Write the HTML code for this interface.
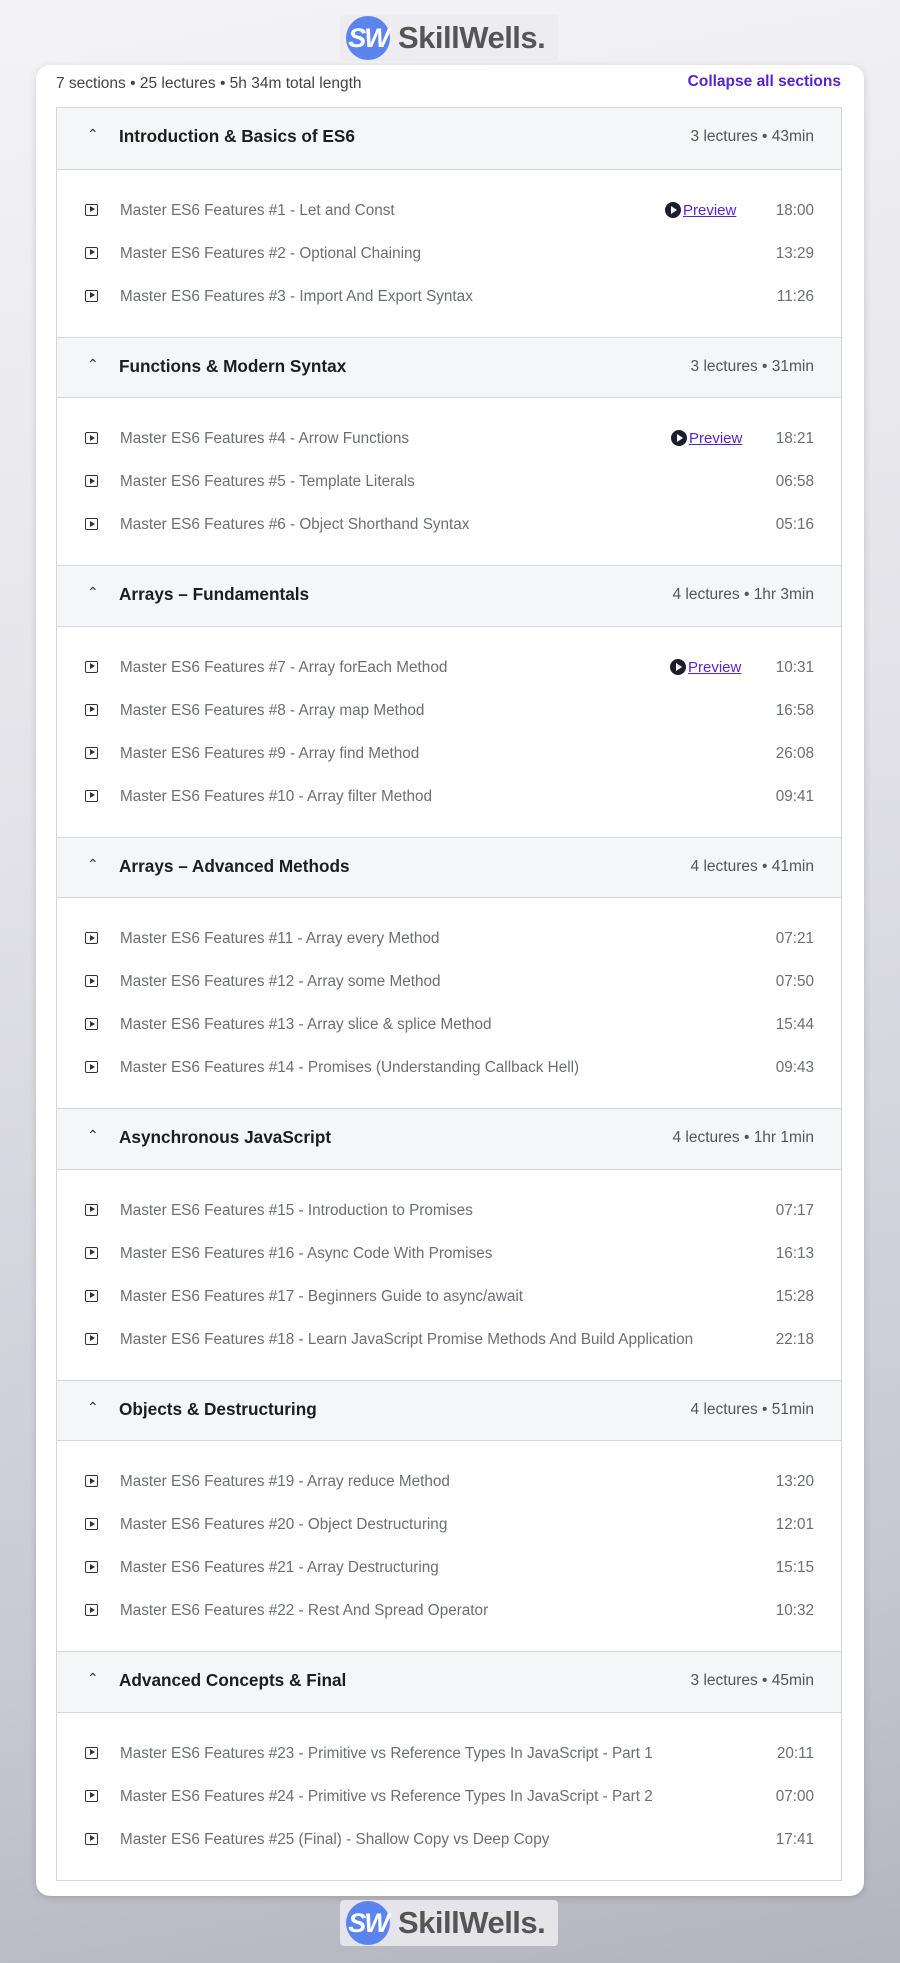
<!DOCTYPE html>
<html><head><meta charset="utf-8"><style>
*{box-sizing:border-box;margin:0;padding:0}
body{width:900px;height:1963px;overflow:hidden;font-family:"Liberation Sans",sans-serif;background:linear-gradient(170deg,#f4f4f7 0%,#e2e2e8 40%,#c8c8d1 80%,#b4b4c0 100%);position:relative}
.logo{position:absolute;left:340px;width:218px;height:46px;background:rgba(235,235,240,.85);border-radius:4px;display:flex;align-items:center}
.logo .c{width:44px;height:44px;border-radius:50%;background:#5b84ee;margin-left:6px;color:#fff;font-weight:900;font-size:27px;display:flex;align-items:center;justify-content:center;letter-spacing:-2px;font-style:italic}
.logo .t{font-weight:bold;font-size:31px;color:#555;margin-left:8px;letter-spacing:-0.5px}
.card{position:absolute;left:36px;top:65px;width:828px;height:1831px;background:#fff;border-radius:14px;box-shadow:0 2px 8px rgba(0,0,0,.15)}
.sum{position:absolute;left:20px;top:10px;font-size:15.5px;color:#444}
.col{position:absolute;right:23px;top:8px;font-size:15.5px;color:#5624d0;font-weight:bold}
.tbl{position:absolute;left:20px;top:42px;width:786px;border:1px solid #d1d7dc}
.hd{height:61.5px;background:#f5f6f8;border-top:1px solid #d1d7dc;border-bottom:1px solid #d1d7dc;position:relative}
.hd:first-child{border-top:none}
.hd .ch{position:absolute;left:30px;top:18px;font-size:14px;color:#333}
.hd .ti{position:absolute;left:62px;top:18px;font-size:17.2px;font-weight:bold;color:#1c1d1f}
.hd .me{position:absolute;right:27px;top:20px;font-size:15.5px;color:#555}
.bl{padding:19px 0}
.it{height:43px;position:relative;font-size:15.3px;color:#6a6f73}
.it .ic{position:absolute;left:28px;top:15px;width:13px;height:12px;border:1.6px solid #333;border-radius:2px}
.it .ic:after{content:"";position:absolute;left:3.5px;top:1.8px;border-left:5px solid #333;border-top:3px solid transparent;border-bottom:3px solid transparent}
.it .tx{position:absolute;left:63px;top:13px}
.it .tm{position:absolute;right:27px;top:13px}
.it .pv{position:absolute;left:610px;top:13px;color:#5624d0;text-decoration:underline;font-size:15px}
.it .pv i{display:inline-block;width:16px;height:16px;border-radius:50%;background:#1c1d2f;vertical-align:-3px;margin-right:2px;position:relative}
.it .pv i:after{content:"";position:absolute;left:6px;top:4px;border-left:6px solid #fff;border-top:4px solid transparent;border-bottom:4px solid transparent}
</style></head><body>
<div class="logo" style="top:15px"><div class="c">SW</div><div class="t">SkillWells.</div></div>
<div class="card">
<div class="sum">7 sections • 25 lectures • 5h 34m total length</div>
<div class="col">Collapse all sections</div>
<div class="tbl">
<div class="hd"><span class="ch">&#8963;</span><span class="ti">Introduction &amp; Basics of ES6</span><span class="me">3 lectures • 43min</span></div>
<div class="bl">
<div class="it"><span class="ic"></span><span class="tx">Master ES6 Features #1 - Let and Const</span><span class="pv" style="left:608px"><i></i>Preview</span><span class="tm">18:00</span></div>
<div class="it"><span class="ic"></span><span class="tx">Master ES6 Features #2 - Optional Chaining</span><span class="tm">13:29</span></div>
<div class="it"><span class="ic"></span><span class="tx">Master ES6 Features #3 - Import And Export Syntax</span><span class="tm">11:26</span></div>
</div>
<div class="hd"><span class="ch">&#8963;</span><span class="ti">Functions &amp; Modern Syntax</span><span class="me">3 lectures • 31min</span></div>
<div class="bl">
<div class="it"><span class="ic"></span><span class="tx">Master ES6 Features #4 - Arrow Functions</span><span class="pv" style="left:614px"><i></i>Preview</span><span class="tm">18:21</span></div>
<div class="it"><span class="ic"></span><span class="tx">Master ES6 Features #5 - Template Literals</span><span class="tm">06:58</span></div>
<div class="it"><span class="ic"></span><span class="tx">Master ES6 Features #6 - Object Shorthand Syntax</span><span class="tm">05:16</span></div>
</div>
<div class="hd"><span class="ch">&#8963;</span><span class="ti">Arrays – Fundamentals</span><span class="me">4 lectures • 1hr 3min</span></div>
<div class="bl">
<div class="it"><span class="ic"></span><span class="tx">Master ES6 Features #7 - Array forEach Method</span><span class="pv" style="left:613px"><i></i>Preview</span><span class="tm">10:31</span></div>
<div class="it"><span class="ic"></span><span class="tx">Master ES6 Features #8 - Array map Method</span><span class="tm">16:58</span></div>
<div class="it"><span class="ic"></span><span class="tx">Master ES6 Features #9 - Array find Method</span><span class="tm">26:08</span></div>
<div class="it"><span class="ic"></span><span class="tx">Master ES6 Features #10 - Array filter Method</span><span class="tm">09:41</span></div>
</div>
<div class="hd"><span class="ch">&#8963;</span><span class="ti">Arrays – Advanced Methods</span><span class="me">4 lectures • 41min</span></div>
<div class="bl">
<div class="it"><span class="ic"></span><span class="tx">Master ES6 Features #11 - Array every Method</span><span class="tm">07:21</span></div>
<div class="it"><span class="ic"></span><span class="tx">Master ES6 Features #12 - Array some Method</span><span class="tm">07:50</span></div>
<div class="it"><span class="ic"></span><span class="tx">Master ES6 Features #13 - Array slice &amp; splice Method</span><span class="tm">15:44</span></div>
<div class="it"><span class="ic"></span><span class="tx">Master ES6 Features #14 - Promises (Understanding Callback Hell)</span><span class="tm">09:43</span></div>
</div>
<div class="hd"><span class="ch">&#8963;</span><span class="ti">Asynchronous JavaScript</span><span class="me">4 lectures • 1hr 1min</span></div>
<div class="bl">
<div class="it"><span class="ic"></span><span class="tx">Master ES6 Features #15 - Introduction to Promises</span><span class="tm">07:17</span></div>
<div class="it"><span class="ic"></span><span class="tx">Master ES6 Features #16 - Async Code With Promises</span><span class="tm">16:13</span></div>
<div class="it"><span class="ic"></span><span class="tx">Master ES6 Features #17 - Beginners Guide to async/await</span><span class="tm">15:28</span></div>
<div class="it"><span class="ic"></span><span class="tx">Master ES6 Features #18 - Learn JavaScript Promise Methods And Build Application</span><span class="tm">22:18</span></div>
</div>
<div class="hd"><span class="ch">&#8963;</span><span class="ti">Objects &amp; Destructuring</span><span class="me">4 lectures • 51min</span></div>
<div class="bl">
<div class="it"><span class="ic"></span><span class="tx">Master ES6 Features #19 - Array reduce Method</span><span class="tm">13:20</span></div>
<div class="it"><span class="ic"></span><span class="tx">Master ES6 Features #20 - Object Destructuring</span><span class="tm">12:01</span></div>
<div class="it"><span class="ic"></span><span class="tx">Master ES6 Features #21 - Array Destructuring</span><span class="tm">15:15</span></div>
<div class="it"><span class="ic"></span><span class="tx">Master ES6 Features #22 - Rest And Spread Operator</span><span class="tm">10:32</span></div>
</div>
<div class="hd"><span class="ch">&#8963;</span><span class="ti">Advanced Concepts &amp; Final</span><span class="me">3 lectures • 45min</span></div>
<div class="bl">
<div class="it"><span class="ic"></span><span class="tx">Master ES6 Features #23 - Primitive vs Reference Types In JavaScript - Part 1</span><span class="tm">20:11</span></div>
<div class="it"><span class="ic"></span><span class="tx">Master ES6 Features #24 - Primitive vs Reference Types In JavaScript - Part 2</span><span class="tm">07:00</span></div>
<div class="it"><span class="ic"></span><span class="tx">Master ES6 Features #25 (Final) - Shallow Copy vs Deep Copy</span><span class="tm">17:41</span></div>
</div>
</div>
</div>
<div class="logo" style="top:1900px"><div class="c">SW</div><div class="t">SkillWells.</div></div>
</body></html>
